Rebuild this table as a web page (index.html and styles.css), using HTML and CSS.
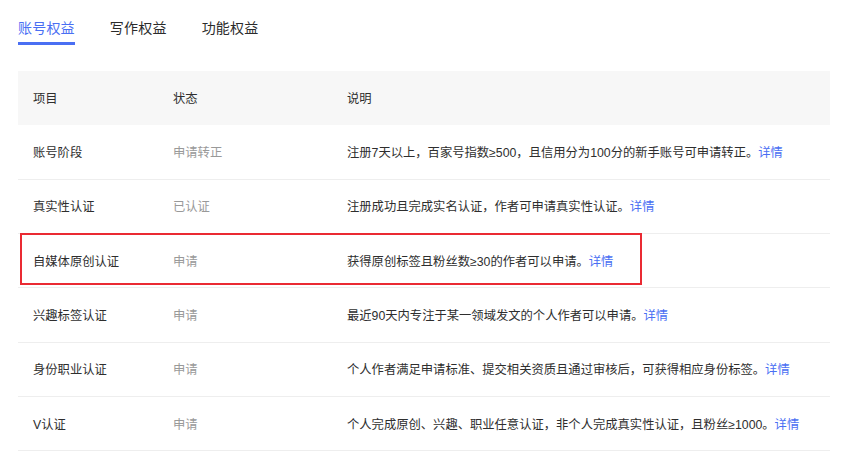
FILE: index.html
```html
<!DOCTYPE html>
<html lang="zh-CN">
<head>
<meta charset="utf-8">
<title>账号权益</title>
<link rel="stylesheet" href="styles.css">
</head>
<body>
<div class="page">
  <nav class="tabs">
    <a class="tab active">账号权益</a>
    <a class="tab">写作权益</a>
    <a class="tab">功能权益</a>
  </nav>
  <div class="table-wrap">
    <table class="rights">
      <colgroup>
        <col class="c1"><col class="c2"><col class="c3">
      </colgroup>
      <thead>
        <tr><th>项目</th><th>状态</th><th>说明</th></tr>
      </thead>
      <tbody>
        <tr><td class="name">账号阶段</td><td class="status">申请转正</td><td class="desc">注册7天以上，百家号指数≥500，且信用分为100分的新手账号可申请转正。<a class="more">详情</a></td></tr>
        <tr><td class="name">真实性认证</td><td class="status">已认证</td><td class="desc">注册成功且完成实名认证，作者可申请真实性认证。<a class="more">详情</a></td></tr>
        <tr><td class="name">自媒体原创认证</td><td class="status">申请</td><td class="desc">获得原创标签且粉丝数≥30的作者可以申请。<a class="more">详情</a></td></tr>
        <tr><td class="name">兴趣标签认证</td><td class="status">申请</td><td class="desc">最近90天内专注于某一领域发文的个人作者可以申请。<a class="more">详情</a></td></tr>
        <tr><td class="name">身份职业认证</td><td class="status">申请</td><td class="desc">个人作者满足申请标准、提交相关资质且通过审核后，可获得相应身份标签。<a class="more">详情</a></td></tr>
        <tr><td class="name">V认证</td><td class="status">申请</td><td class="desc">个人完成原创、兴趣、职业任意认证，非个人完成真实性认证，且粉丝≥1000。<a class="more">详情</a></td></tr>
      </tbody>
    </table>
    <div class="highlight"></div>
  </div>
</div>
</body>
</html>
```

FILE: styles.css
```css
* { box-sizing: border-box; }
html, body { margin: 0; padding: 0; background: #fff; }
body {
  font-family: "Liberation Sans", "Noto Sans CJK SC", sans-serif;
  color: #333;
}
.page {
  padding: 18px 36px 0 18px;
}
.tabs {
  display: flex;
  gap: 35px;
  height: 27px;
}
.tab {
  font-size: 14px;
  line-height: 20px;
  height: 27px;
  padding-bottom: 4px;
  color: #2b2b2b;
  cursor: pointer;
  border-bottom: 3px solid transparent;
  letter-spacing: 0.2px;
}
.tab.active {
  color: #4a6ff3;
  border-bottom-color: #4a6ff3;
}
.table-wrap {
  position: relative;
  margin-top: 26px;
  width: 812px;
}
.rights {
  width: 812px;
  border-collapse: collapse;
  table-layout: fixed;
  font-size: 12.3px;
}
.c1 { width: 140px; }
.c2 { width: 175px; }
.rights th {
  background: #f7f7f7;
  height: 54px;
  font-weight: normal;
  text-align: left;
  color: #2e2e2e;
  padding: 0 0 0 15px;
}
.rights td {
  height: 54.33px;
  padding: 0 0 0 15px;
  border-bottom: 1px solid #eeeeee;
  white-space: nowrap;
}
.rights th:nth-child(3), .rights td:nth-child(3) { padding-left: 14px; }
.status { color: #999; }
.name, .desc { color: #2e2e2e; }
.more {
  color: #4a6ff3;
  cursor: pointer;
}
.highlight {
  position: absolute;
  left: 2px;
  top: 162px;
  width: 622px;
  height: 52px;
  border: 2px solid #ea2a33;
  pointer-events: none;
}
```
